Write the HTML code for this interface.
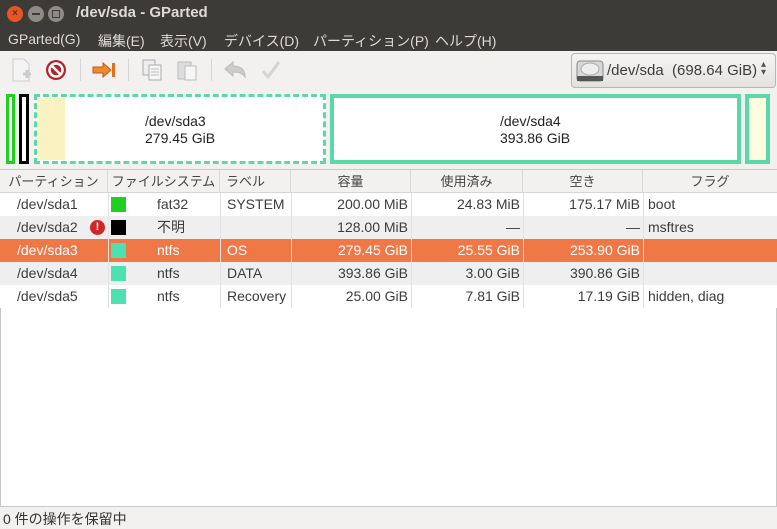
<!DOCTYPE html>
<html><head><meta charset="utf-8"><style>
*{margin:0;padding:0;box-sizing:border-box}
body{width:777px;height:529px;overflow:hidden;background:#f2f1f0;font-family:"Liberation Sans","Noto Sans CJK JP",sans-serif;font-size:14px;color:#3c3c3c;position:relative}
.a{position:absolute}
#title{left:0;top:0;width:777px;height:28px;background:#3c3b37}
#menu{left:0;top:28px;width:777px;height:23px;background:#3c3b37;color:#dfdbd2;font-size:14px}
#menu span{position:absolute;top:3px}
.btn{width:16px;height:16px;border-radius:50%;top:6px}
.part{top:94px;height:70px}
.hdr{top:170px;height:23px;background:#f2f1f0;border-bottom:1px solid #d6d6d6}
.hc{position:absolute;top:0;height:23px;line-height:23px;text-align:center;border-right:1px solid #d8d8d8;color:#444;font-size:13px;white-space:nowrap;overflow:hidden}
.row{position:absolute;left:0;width:777px;height:23px;line-height:23px}
.c{position:absolute;top:0;height:23px;white-space:nowrap}
.r{text-align:right}
.sw{position:absolute;top:4px;width:15px;height:15px}
.sep{position:absolute;top:59px;width:1px;height:22px;background:#d6d6d6}
</style></head><body>
<div id="title" class="a">
 <div class="a btn" style="left:7px;background:#e95420;color:#3c3b37;font-size:10px;text-align:center;line-height:16px;font-weight:bold">×</div>
 <div class="a btn" style="left:28px;background:#8e8b84"><div style="position:absolute;left:4px;top:7px;width:8px;height:2px;background:#3c3b37"></div></div>
 <div class="a btn" style="left:48px;background:#8e8b84"><div style="position:absolute;left:4px;top:4px;width:8px;height:8px;border:1.5px solid #3c3b37"></div></div>
 <div class="a" style="left:76px;top:4px;color:#dfdbd2;font-weight:bold;font-size:15px">/dev/sda - GParted</div>
</div>
<div id="menu" class="a">
 <span style="left:8px">GParted(G)</span><span style="left:98px">編集(E)</span><span style="left:160px">表示(V)</span><span style="left:224px">デバイス(D)</span><span style="left:313px">パーティション(P)</span><span style="left:435px">ヘルプ(H)</span>
</div>
<!-- toolbar -->
<svg class="a" style="left:10px;top:57px" width="24" height="26"><path d="M3 2h11l5 5v17H3z" fill="#f4f4f4" stroke="#ccc"/><path d="M13 17h8M17 13v8" stroke="#ccc" stroke-width="3"/></svg>
<svg class="a" style="left:44px;top:58px" width="24" height="24"><circle cx="12" cy="12" r="10" fill="#b4232a"/><circle cx="12" cy="12" r="6.5" fill="none" stroke="#fff" stroke-width="2.5"/><path d="M7.5 7.5l9 9" stroke="#fff" stroke-width="2.5"/></svg>
<div class="sep" style="left:80px"></div>
<svg class="a" style="left:91px;top:60px" width="26" height="20"><path d="M2 7h10V3l8 7-8 7v-4H2z" fill="#f08a30" stroke="#c05a10"/><rect x="21" y="3" width="3" height="14" fill="#e07020"/></svg>
<div class="sep" style="left:128px"></div>
<svg class="a" style="left:141px;top:58px" width="22" height="24"><rect x="2" y="2" width="12" height="15" fill="#eee" stroke="#aaa"/><rect x="8" y="7" width="12" height="15" fill="#f6f6f6" stroke="#aaa"/><path d="M10 11h8M10 14h8M10 17h8" stroke="#bbb"/></svg>
<svg class="a" style="left:176px;top:58px" width="22" height="24"><rect x="2" y="4" width="13" height="17" fill="#ddd" stroke="#bbb"/><rect x="9" y="8" width="11" height="14" fill="#f6f6f6" stroke="#bbb"/></svg>
<div class="sep" style="left:211px"></div>
<svg class="a" style="left:223px;top:60px" width="26" height="20"><path d="M2 9l8-7v4c8 0 12 4 12 11-3-4-6-5-12-5v4z" fill="#ccc" stroke="#bbb"/></svg>
<svg class="a" style="left:260px;top:59px" width="22" height="22"><path d="M3 12l5 6L19 3" fill="none" stroke="#d4d4d4" stroke-width="3"/></svg>
<div class="a" style="left:571px;top:53px;width:205px;height:35px;border:1px solid #b8b6b2;border-radius:4px;background:linear-gradient(#f6f5f4,#e4e2df)">
 <svg class="a" style="left:4px;top:5px" width="28" height="24"><rect x="1" y="2" width="26" height="20" rx="3" fill="#d8d8d8" stroke="#888"/><ellipse cx="14" cy="10" rx="9" ry="6" fill="#eee" stroke="#aaa"/><rect x="1" y="17" width="26" height="5" fill="#555"/></svg>
 <span class="a" style="left:35px;top:8px;font-size:15px">/dev/sda&nbsp; (698.64 GiB)</span>
 <span class="a" style="left:189px;top:7px;font-size:10px;line-height:8px;color:#555">▴<br>▾</span>
</div>
<!-- partition map -->
<div class="a part" style="left:6px;width:9px;border:3px solid #20d020;background:#fff"></div>
<div class="a part" style="left:19px;width:10px;border:3px solid #000;background:#fff"></div>
<div class="a part" style="left:34px;width:292px;border:3px dashed #5ad8a8;background:#fff">
 <div class="a" style="left:1px;top:1px;width:27px;height:62px;background:#f8f3c0"></div>
 <div class="a" style="left:108px;top:16px;font-size:14px;color:#222;line-height:17px">/dev/sda3<br>279.45 GiB</div>
</div>
<div class="a part" style="left:330px;width:411px;border:4px solid #5ad8a8;background:#fff">
 <div class="a" style="left:166px;top:15px;font-size:14px;color:#222;line-height:17px">/dev/sda4<br>393.86 GiB</div>
</div>
<div class="a part" style="left:745px;width:25px;border:4px solid #5ad8a8;background:#fffde0"></div>
<!-- table -->
<div class="a" style="left:0;top:169px;width:777px;height:338px;background:#fff;border:1px solid #c8c8c8"></div>
<div class="a hdr" style="left:0;width:777px">
 <div class="hc" style="left:0;width:108px">パーティション</div>
 <div class="hc" style="left:108px;width:112px">ファイルシステム</div>
 <div class="hc" style="left:220px;width:71px;text-align:left;padding-left:6px">ラベル</div>
 <div class="hc" style="left:291px;width:120px">容量</div>
 <div class="hc" style="left:411px;width:112px">使用済み</div>
 <div class="hc" style="left:523px;width:120px">空き</div>
 <div class="hc" style="left:643px;width:134px;border:none">フラグ</div>
</div>
<div class="row" style="top:193px;background:#fff">
 <div class="c" style="left:17px">/dev/sda1</div><div class="sw" style="left:111px;background:#20d020"></div><div class="c" style="left:157px">fat32</div><div class="c" style="left:227px">SYSTEM</div>
 <div class="c r" style="right:369px">200.00 MiB</div><div class="c r" style="right:257px">24.83 MiB</div><div class="c r" style="right:137px">175.17 MiB</div><div class="c" style="left:648px">boot</div>
</div>
<div class="row" style="top:216px;background:#efefef">
 <div class="c" style="left:17px">/dev/sda2</div><div class="a" style="left:90px;top:4px;width:15px;height:15px;border-radius:50%;background:#d02828;color:#fff;font-size:11px;font-weight:bold;text-align:center;line-height:15px">!</div><div class="sw" style="left:111px;background:#000"></div><div class="c" style="left:157px">不明</div>
 <div class="c r" style="right:369px">128.00 MiB</div><div class="c r" style="right:257px">—</div><div class="c r" style="right:137px">—</div><div class="c" style="left:648px">msftres</div>
</div>
<div class="row" style="top:239px;background:#f07746;color:#fff">
 <div class="c" style="left:17px">/dev/sda3</div><div class="sw" style="left:111px;background:#4de0b0"></div><div class="c" style="left:157px">ntfs</div><div class="c" style="left:227px">OS</div>
 <div class="c r" style="right:369px">279.45 GiB</div><div class="c r" style="right:257px">25.55 GiB</div><div class="c r" style="right:137px">253.90 GiB</div>
</div>
<div class="row" style="top:262px;background:#efefef">
 <div class="c" style="left:17px">/dev/sda4</div><div class="sw" style="left:111px;background:#4de0b0"></div><div class="c" style="left:157px">ntfs</div><div class="c" style="left:227px">DATA</div>
 <div class="c r" style="right:369px">393.86 GiB</div><div class="c r" style="right:257px">3.00 GiB</div><div class="c r" style="right:137px">390.86 GiB</div>
</div>
<div class="row" style="top:285px;background:#fff">
 <div class="c" style="left:17px">/dev/sda5</div><div class="sw" style="left:111px;background:#4de0b0"></div><div class="c" style="left:157px">ntfs</div><div class="c" style="left:227px">Recovery</div>
 <div class="c r" style="right:369px">25.00 GiB</div><div class="c r" style="right:257px">7.81 GiB</div><div class="c r" style="right:137px">17.19 GiB</div><div class="c" style="left:648px">hidden, diag</div>
</div>
<div class="a" style="left:108px;top:193px;width:1px;height:115px;background:#e2e2e2"></div>
<div class="a" style="left:220px;top:193px;width:1px;height:115px;background:#e2e2e2"></div>
<div class="a" style="left:291px;top:193px;width:1px;height:115px;background:#e2e2e2"></div>
<div class="a" style="left:411px;top:193px;width:1px;height:115px;background:#e2e2e2"></div>
<div class="a" style="left:523px;top:193px;width:1px;height:115px;background:#e2e2e2"></div>
<div class="a" style="left:643px;top:193px;width:1px;height:115px;background:#e2e2e2"></div>
<div class="a" style="left:3px;top:509px;font-size:14px;color:#333">0 件の操作を保留中</div>
</body></html>
